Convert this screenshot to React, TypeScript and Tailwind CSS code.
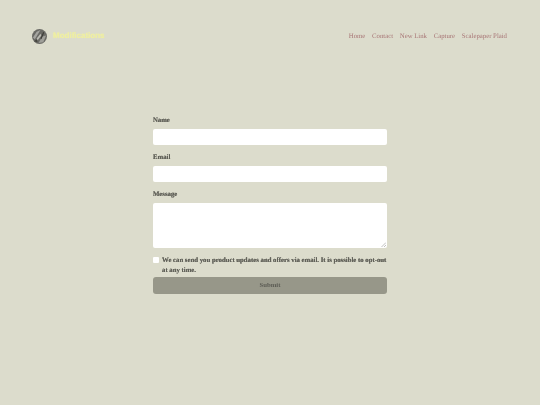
const navLinks = ['Home', 'Contact', 'New Link', 'Capture', 'Scalepaper Plaid'];

const serif = "font-['Liberation_Serif',serif]";

function LogoMark() {
  return (
    <svg viewBox="0 0 16 16" className="size-[15px] shrink-0">
      <circle cx="8" cy="8" r="8" fill="#6a6a65" />
      <path d="M1 9 L5 3 L9 1 L3 11 Z" fill="#a5a5a0" />
      <path d="M7 15 L11 8 L15 7 L12 14 Z" fill="#a0a09a" />
      <path d="M5 10 L9 5 L10 7 L6 12 Z" fill="#bcbcb4" />
      <path d="M9 10 L12 3 L13 4 L10 11 Z" fill="#3c3c38" />
      <path d="M2 13 L5 11 L6 14 Z" fill="#45453f" />
    </svg>
  );
}

export default function App() {
  return (
    <div className={`flex min-h-[405px] flex-col bg-[#dcdccc] [text-rendering:geometricPrecision] ${serif}`}>
      <header className="flex items-start justify-between pl-8 pr-[33px] pt-7 blur-[0.35px]">
        <div className="flex h-[16px] items-center gap-[6px]">
          <LogoMark />
          <span className="font-['Liberation_Sans',sans-serif] text-[8px] font-bold text-[#eeeea2] [text-shadow:0_0_1px_#eeeea2]">
            Modifications
          </span>
        </div>
        <nav className="flex gap-[6.75px]">
          {navLinks.map((link) => (
            <a key={link} href="#" className="text-[6.75px] leading-[18px] text-[#a87676]">
              {link}
            </a>
          ))}
        </nav>
      </header>

      <form className="mx-auto mt-[70px] flex w-[234px] flex-col text-[6.75px] font-bold text-[#62625a] blur-[0.35px] [text-shadow:0_0_0.5px_#62625a]">
        <label className="leading-[9px]">Name</label>
        <input className="mt-[4px] h-[16px] rounded-[2px] bg-white" />
        <label className="mt-[8px] leading-[9px]">Email</label>
        <input className="mt-[4px] h-[16px] rounded-[2px] bg-white" />
        <label className="mt-[8px] leading-[9px]">Message</label>
        <div className="relative mt-[4px]">
          <textarea className="block h-[45px] w-full resize-none rounded-[2px] bg-white" />
          <svg viewBox="0 0 5 5" className="absolute bottom-[1px] right-[1px] size-[5px]">
            <path d="M0.5 5 L5 0.5 M3 5 L5 3" stroke="#a8a8a8" strokeWidth="0.7" />
          </svg>
        </div>
        <div className="mt-[8px] flex gap-[3px]">
          <input type="checkbox" className="mt-[1px] size-[6px] shrink-0 appearance-none rounded-[1px] bg-white" />
          <span className="leading-[10px]">
            We can send you product updates and offers via email. It is possible to opt-out at any time.
          </span>
        </div>
        <button type="button" className="mt-[1px] h-[17px] rounded-[3px] bg-[#979789] text-[6.75px] font-bold text-[#5c5c54]">
          Submit
        </button>
      </form>
    </div>
  );
}
